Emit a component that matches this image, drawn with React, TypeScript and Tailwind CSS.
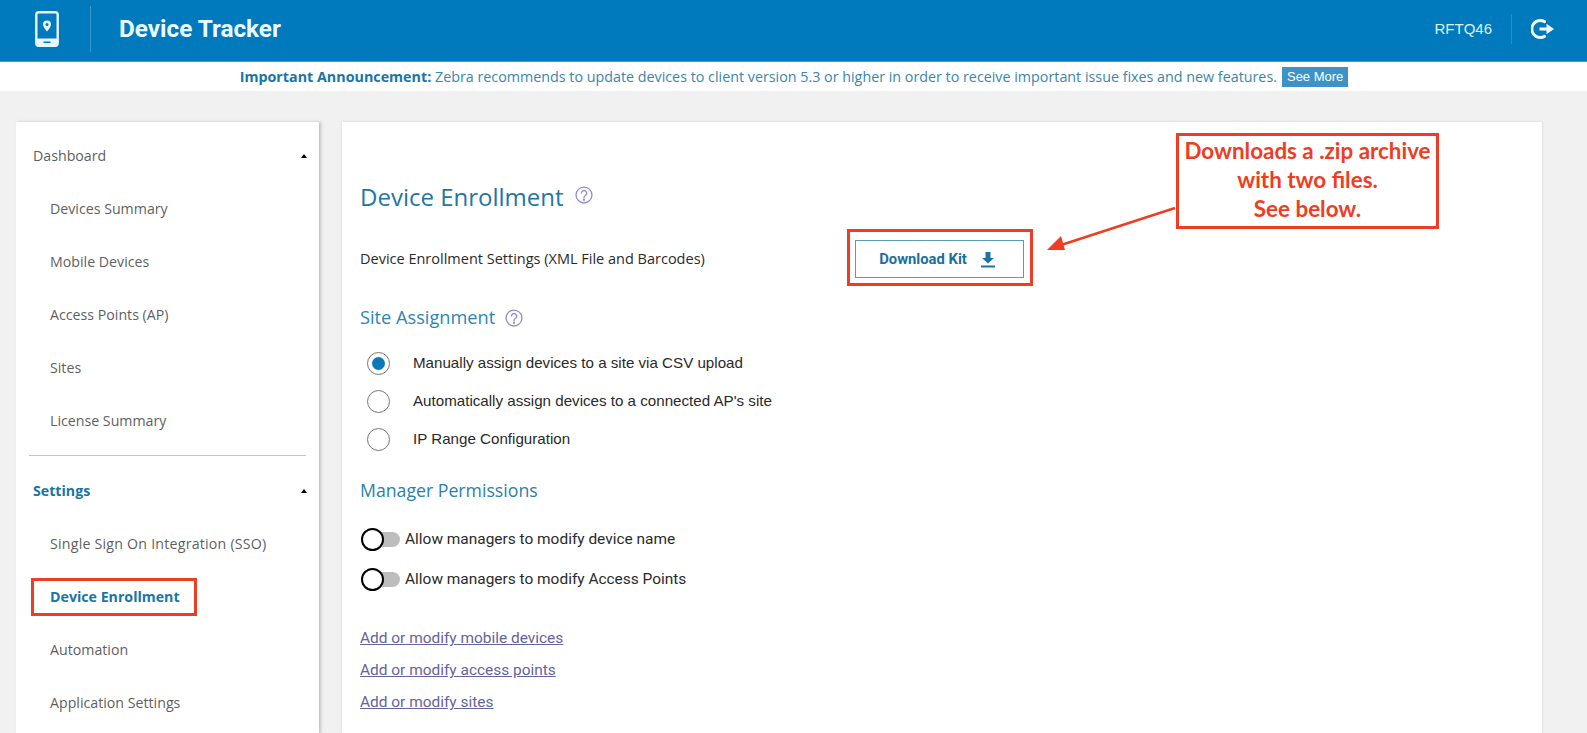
import React from "react";

const roboto = "font-['Roboto',sans-serif]";

function Help({ size }: { size: number }) {
  return (
    <svg width={size} height={size} viewBox="0 0 24 24" fill="none" stroke="#8f8fd0" strokeWidth="1.8" strokeLinecap="round" className="shrink-0">
      <circle cx="12" cy="12" r="10.6" />
      <path d="M8.6 9.4a3.5 3.5 0 1 1 5.4 3c-1.3.8-2 1.5-2 2.9" />
      <circle cx="12" cy="18.2" r="0.7" fill="#8f8fd0" />
    </svg>
  );
}

function NavItem({ label, active, wide }: { label: string; active?: boolean; wide?: boolean }) {
  return (
    <div className={`h-[53px] flex items-center pl-[34px] text-[14.2px] ${wide ? "tracking-[0.22px]" : ""} ${active ? "font-bold text-[#1a75a5]" : "text-[#5f5f5f]"}`}>
      {label}
    </div>
  );
}

function NavHead({ label, active }: { label: string; active?: boolean }) {
  return (
    <div className={`h-[53px] flex items-center justify-between pl-[17px] pr-[12px] text-[14.2px] ${active ? "font-bold text-[#1a75a5]" : "text-[#5f5f5f]"}`}>
      <span>{label}</span>
      <span className="w-0 h-0 border-x-[3px] border-x-transparent border-b-[4px] border-b-black" />
    </div>
  );
}

function Radio({ label, checked }: { label: string; checked?: boolean }) {
  return (
    <div className="h-[38px] flex items-center">
      <span className="ml-[7px] w-[23px] h-[23px] rounded-full border-[1.5px] border-[#777] flex items-center justify-center bg-white shrink-0">
        {checked && <span className="w-[13px] h-[13px] rounded-full bg-[#0b79b8]" />}
      </span>
      <span className="ml-[23px] font-['Liberation_Sans',sans-serif] text-[15.15px] text-[#2a2a2a]">{label}</span>
    </div>
  );
}

function Toggle({ label }: { label: string }) {
  return (
    <div className="h-[40.5px] flex items-center">
      <span className="relative ml-[1px] w-[39px] h-[23px] shrink-0">
        <span className="absolute left-[6px] right-0 top-[4px] h-[15px] rounded-full bg-[#bdbdbd]" />
        <span className="absolute left-0 top-0 w-[23px] h-[23px] rounded-full border-2 border-black bg-white" />
      </span>
      <span className={`ml-[5px] ${roboto} text-[15.45px] text-[#2b2b2b]`}>{label}</span>
    </div>
  );
}

function LinkRow({ label }: { label: string }) {
  return (
    <div className="h-[32px] flex items-center">
      <a className={`${roboto} text-[15.45px] text-[#64649a] underline`}>{label}</a>
    </div>
  );
}

export default function App() {
  return (
    <div className="relative h-[733px] w-[1587px] overflow-hidden bg-[#f1f1f1] flex flex-col">
      <header className="h-[62px] shrink-0 bg-[#0079bd] flex items-center pb-[3px] text-white border-b border-[#3f9bd0]">
        <div className="w-[91px] h-[46px] flex items-center justify-center border-r border-[#3a97cd] pl-[3px]">
          <svg width="24" height="36" viewBox="0 0 24 36" fill="none">
            <rect x="1.3" y="1.3" width="21.4" height="33.4" rx="2.5" stroke="#e8f6ff" strokeWidth="2.4" />
            <rect x="1" y="27.5" width="22" height="7.5" rx="2" fill="#e8f6ff" />
            <rect x="8.5" y="30.5" width="7" height="1.5" fill="#0079bd" />
            <path d="M12 9.5a4 4 0 0 0-4 4c0 2.8 4 7 4 7s4-4.200 4-7a4 4 0 0 0-4-4z" fill="#e8f6ff" />
            <circle cx="12" cy="13.5" r="1.5" fill="#0079bd" />
          </svg>
        </div>
        <div className={`ml-[28px] ${roboto} font-bold text-[24.3px] text-[#eafaff]`}>Device Tracker</div>
        <div className="ml-auto font-['Liberation_Sans',sans-serif] text-[15px] text-[#dff3ff]">RFTQ46</div>
        <div className="ml-[19px] w-px h-[30px] bg-[#2c8fc8]" />
        <svg className="ml-[19px] mr-[32px]" width="24" height="22" viewBox="0 0 24 22" fill="none">
          <path d="M13.5 3.600A8.500 8.500 0 1 0 13.500 18.400" stroke="#f2fbff" strokeWidth="3" strokeLinecap="round" />
          <path d="M8.500 9.400h7V5.800l7.500 5.200-7.500 5.200v-3.600h-7z" fill="#f2fbff" />
        </svg>
      </header>

      <div className="h-[29px] shrink-0 bg-white flex items-center justify-center font-['Open_Sans',sans-serif] text-[14.3px] text-[#3b86a9]">
        <span className="ml-[1px] whitespace-nowrap">
          <b className="font-bold text-[#1a75a5]">Important Announcement:</b> Zebra recommends to update devices to client version 5.3 or higher in order to receive important issue fixes and new features.
        </span>
        <span className="ml-[5px] h-[20px] px-[5px] flex items-center bg-[#3d93c6] font-['Liberation_Sans',sans-serif] text-[13px] text-white">See More</span>
      </div>

      <div className="flex-1 min-h-0 flex pt-[31px] pl-[16px]">
        <aside className="w-[303px] shrink-0 bg-white pt-[7px] shadow-[2px_0_3px_rgba(0,0,0,0.2)] font-['Open_Sans',sans-serif]">
          <NavHead label="Dashboard" />
          <NavItem label="Devices Summary" />
          <NavItem label="Mobile Devices" />
          <NavItem label="Access Points (AP)" />
          <NavItem label="Sites" />
          <NavItem label="License Summary" />
          <div className="mt-[8px] mb-[8px] mx-[13px] h-px bg-[#c4c4c4]" />
          <NavHead label="Settings" active />
          <NavItem label="Single Sign On Integration (SSO)" wide />
          <NavItem label="Device Enrollment" active />
          <NavItem label="Automation" />
          <NavItem label="Application Settings" />
        </aside>

        <main className="ml-[23px] w-[1200px] bg-white pl-[18px] pt-[59px] shadow-[0_0_3px_rgba(0,0,0,0.12)] font-['Open_Sans',sans-serif]">
          <div className="h-[32px] flex items-center">
            <h1 className="text-[24px] text-[#1f77a6] font-normal">Device Enrollment</h1>
            <span className="ml-[11px] mb-[4px]"><Help size={18} /></span>
          </div>
          <div className="mt-[34px] h-[24px] flex items-center text-[14.5px] text-[#2b2b2b] relative">
            <span>Device Enrollment Settings (XML File and Barcodes)</span>
          </div>
          <div className="mt-[34px] h-[26px] flex items-center">
            <h2 className="text-[18.2px] text-[#2c86b4] font-normal">Site Assignment</h2>
            <span className="ml-[10px]"><Help size={18} /></span>
          </div>
          <div className="mt-[13px]">
            <Radio label="Manually assign devices to a site via CSV upload" checked />
            <Radio label="Automatically assign devices to a connected AP's site" />
            <Radio label="IP Range Configuration" />
          </div>
          <div className="mt-[20px] h-[24px] flex items-center">
            <h2 className="text-[17.7px] text-[#2c80aa] font-normal">Manager Permissions</h2>
          </div>
          <div className="mt-[17px]">
            <Toggle label="Allow managers to modify device name" />
            <Toggle label="Allow managers to modify Access Points" />
          </div>
          <div className="mt-[23px]">
            <LinkRow label="Add or modify mobile devices" />
            <LinkRow label="Add or modify access points" />
            <LinkRow label="Add or modify sites" />
          </div>
        </main>
      </div>

      {/* Download button with its annotations, laid over the page */}
      <button className={`absolute left-[855px] top-[240px] w-[169px] h-[38px] border border-[#5b9bb8] bg-white flex items-center justify-center pr-[4px] ${roboto} font-bold text-[14.8px] text-[#1a6f9e]`}>
        Download Kit
        <svg className="ml-[13px]" width="16" height="17" viewBox="0 0 16 17" fill="#1a75a5">
          <path d="M5.500 1h5v6h3.500L8 12.500 2 7h3.500z" />
          <rect x="1" y="14.500" width="14" height="2" />
        </svg>
      </button>
      <div className="absolute left-[847px] top-[229px] w-[186px] h-[57px] border-[3px] border-[#ee3d23]" />
      <div className="absolute left-[31px] top-[578px] w-[166px] h-[38px] border-[3px] border-[#ee3d23]" />
      <div className="absolute left-[1176px] top-[133px] w-[263px] h-[96px] border-[3px] border-[#ee3d23] bg-white pb-[3px] flex flex-col items-center justify-center font-['Lato',sans-serif] font-bold text-[22.4px] leading-[29px] text-[#ee3d23]">
        <span>Downloads a .zip archive</span>
        <span>with two files.</span>
        <span>See below.</span>
      </div>
      <svg className="absolute left-[1040px] top-[200px]" width="140" height="60" viewBox="0 0 140 60" fill="none">
        <path d="M135 8 L18 46" stroke="#ee3d23" strokeWidth="2.500" />
        <path d="M7 50 L21 36 L25 50 Z" fill="#ee3d23" />
      </svg>
    </div>
  );
}
